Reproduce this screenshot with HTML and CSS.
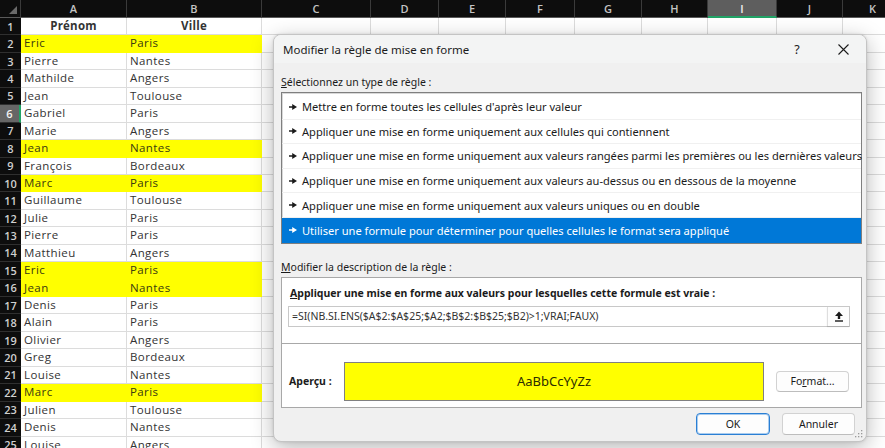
FILE: index.html
```html
<!DOCTYPE html>
<html lang="fr">
<head>
<meta charset="utf-8">
<title>Modifier la règle de mise en forme</title>
<link rel="stylesheet" href="styles.css">
</head>
<body>
<div class="sheet">
  <div class="corner"><svg class="tri" width="8" height="8" viewBox="0 0 8 8"><polygon points="8,0 8,8 0,8" fill="#6a6a6a"/></svg></div>
  <div class="ch">A</div><div class="ch">B</div><div class="ch">C</div><div class="ch">D</div><div class="ch">E</div><div class="ch">F</div><div class="ch">G</div><div class="ch">H</div><div class="ch sel">I</div><div class="ch">J</div><div class="ch">K</div>

  <div class="rh">1</div><div class="c hd">Prénom</div><div class="c hd">Ville</div><div class="c"></div><div class="c"></div><div class="c"></div><div class="c"></div><div class="c"></div><div class="c"></div><div class="c"></div><div class="c"></div><div class="c"></div>
  <div class="rh">2</div><div class="c y">Eric</div><div class="c y">Paris</div><div class="c rest"></div>
  <div class="rh">3</div><div class="c">Pierre</div><div class="c">Nantes</div><div class="c rest"></div>
  <div class="rh">4</div><div class="c">Mathilde</div><div class="c">Angers</div><div class="c rest"></div>
  <div class="rh">5</div><div class="c">Jean</div><div class="c">Toulouse</div><div class="c rest"></div>
  <div class="rh sel">6</div><div class="c">Gabriel</div><div class="c">Paris</div><div class="c rest"></div>
  <div class="rh">7</div><div class="c">Marie</div><div class="c">Angers</div><div class="c rest"></div>
  <div class="rh">8</div><div class="c y">Jean</div><div class="c y">Nantes</div><div class="c rest"></div>
  <div class="rh">9</div><div class="c">François</div><div class="c">Bordeaux</div><div class="c rest"></div>
  <div class="rh">10</div><div class="c y">Marc</div><div class="c y">Paris</div><div class="c rest"></div>
  <div class="rh">11</div><div class="c">Guillaume</div><div class="c">Toulouse</div><div class="c rest"></div>
  <div class="rh">12</div><div class="c">Julie</div><div class="c">Paris</div><div class="c rest"></div>
  <div class="rh">13</div><div class="c">Pierre</div><div class="c">Paris</div><div class="c rest"></div>
  <div class="rh">14</div><div class="c">Matthieu</div><div class="c">Angers</div><div class="c rest"></div>
  <div class="rh">15</div><div class="c y">Eric</div><div class="c y">Paris</div><div class="c rest"></div>
  <div class="rh">16</div><div class="c y">Jean</div><div class="c y">Nantes</div><div class="c rest"></div>
  <div class="rh">17</div><div class="c">Denis</div><div class="c">Paris</div><div class="c rest"></div>
  <div class="rh">18</div><div class="c">Alain</div><div class="c">Paris</div><div class="c rest"></div>
  <div class="rh">19</div><div class="c">Olivier</div><div class="c">Angers</div><div class="c rest"></div>
  <div class="rh">20</div><div class="c">Greg</div><div class="c">Bordeaux</div><div class="c rest"></div>
  <div class="rh">21</div><div class="c">Louise</div><div class="c">Nantes</div><div class="c rest"></div>
  <div class="rh">22</div><div class="c y">Marc</div><div class="c y">Paris</div><div class="c rest"></div>
  <div class="rh">23</div><div class="c">Julien</div><div class="c">Toulouse</div><div class="c rest"></div>
  <div class="rh">24</div><div class="c">Denis</div><div class="c">Nantes</div><div class="c rest"></div>
  <div class="rh">25</div><div class="c">Louise</div><div class="c">Angers</div><div class="c rest"></div>
</div>

<div class="dialog">
  <div class="titlebar">
    <span class="title">Modifier la règle de mise en forme</span>
    <span class="tb-btn">?</span>
    <span class="tb-btn"><svg width="11" height="11" viewBox="0 0 11 11"><path d="M0.5 0.5L10.5 10.5M10.5 0.5L0.5 10.5" stroke="#1b1b1b" stroke-width="1.1" fill="none"/></svg></span>
  </div>
  <div class="dlg-body">
    <div class="label lbl1"><u>S</u>électionnez un type de règle :</div>
    <ul class="rules">
      <li><svg class="arr" width="8" height="6" viewBox="0 0 8 6"><path d="M0 2.3h3.2V0L8 3 3.2 6V3.7H0z" fill="currentColor"/></svg>Mettre en forme toutes les cellules d'après leur valeur</li>
      <li><svg class="arr" width="8" height="6" viewBox="0 0 8 6"><path d="M0 2.3h3.2V0L8 3 3.2 6V3.7H0z" fill="currentColor"/></svg>Appliquer une mise en forme uniquement aux cellules qui contiennent</li>
      <li><svg class="arr" width="8" height="6" viewBox="0 0 8 6"><path d="M0 2.3h3.2V0L8 3 3.2 6V3.7H0z" fill="currentColor"/></svg>Appliquer une mise en forme uniquement aux valeurs rangées parmi les premières ou les dernières valeurs</li>
      <li><svg class="arr" width="8" height="6" viewBox="0 0 8 6"><path d="M0 2.3h3.2V0L8 3 3.2 6V3.7H0z" fill="currentColor"/></svg>Appliquer une mise en forme uniquement aux valeurs au-dessus ou en dessous de la moyenne</li>
      <li><svg class="arr" width="8" height="6" viewBox="0 0 8 6"><path d="M0 2.3h3.2V0L8 3 3.2 6V3.7H0z" fill="currentColor"/></svg>Appliquer une mise en forme uniquement aux valeurs uniques ou en double</li>
      <li class="on"><svg class="arr" width="8" height="6" viewBox="0 0 8 6"><path d="M0 2.3h3.2V0L8 3 3.2 6V3.7H0z" fill="currentColor"/></svg>Utiliser une formule pour déterminer pour quelles cellules le format sera appliqué</li>
    </ul>
    <div class="label lbl2"><u>M</u>odifier la description de la règle :</div>
    <div class="desc">
      <div class="desc-top">
        <div class="bold-line"><u>A</u>ppliquer une mise en forme aux valeurs pour lesquelles cette formule est vraie :</div>
        <div class="formula">
          <span class="ftext">=SI(NB.SI.ENS($A$2:$A$25;$A2;$B$2:$B$25;$B2)&gt;1;VRAI;FAUX)</span>
          <span class="collapse"><svg width="10" height="11" viewBox="0 0 10 11"><path d="M5 0.5L9 5H6.2V8H3.8V5H1z" fill="#1b1b1b"/><rect x="1" y="9.3" width="8" height="1.4" fill="#1b1b1b"/></svg></span>
        </div>
      </div>
      <div class="desc-bot">
        <span class="apercu">Aperçu :</span>
        <div class="preview">AaBbCcYyZz</div>
        <button class="btn fmt">Fo<u>r</u>mat...</button>
      </div>
    </div>
    <div class="actions">
      <button class="btn ok">OK</button>
      <button class="btn">Annuler</button>
    </div>
  </div>
  <svg class="grip" width="8" height="8" viewBox="0 0 8 8"><g fill="#9a9a9a"><rect x="6" y="0" width="1.3" height="1.3"/><rect x="3" y="3" width="1.3" height="1.3"/><rect x="6" y="3" width="1.3" height="1.3"/><rect x="0" y="6" width="1.3" height="1.3"/><rect x="3" y="6" width="1.3" height="1.3"/><rect x="6" y="6" width="1.3" height="1.3"/></g></svg>
</div>
</body>
</html>
```

FILE: styles.css
```css
* { box-sizing: border-box; margin: 0; padding: 0; }

body {
  width: 885px;
  height: 448px;
  overflow: hidden;
  position: relative;
  background: #ffffff;
  font-family: "Open Sans", "Noto Sans", sans-serif;
}

/* ---------- spreadsheet ---------- */
.sheet {
  display: grid;
  grid-template-columns: 21px 106px 135px 109px 68px 67px 69px 67px 66px 69px 66px 60px;
  grid-template-rows: 18px;
  grid-auto-rows: 17.45px;
  font-size: 11.5px;
  color: #333;
}

.corner {
  background: #0d0d0d;
  border-right: 1px solid #3a3a3a;
  border-bottom: 1px solid #5a5a5a;
  display: flex;
  align-items: flex-end;
  justify-content: flex-end;
  padding: 0 3px 3px 0;
}

.ch {
  background: #0d0d0d;
  color: #c4c4c4;
  border-right: 1px solid #3a3a3a;
  border-bottom: 1px solid #5a5a5a;
  display: flex;
  align-items: center;
  justify-content: center;
  font-size: 11px;
  font-weight: 600;
}
.ch.sel {
  background: #5e5e5e;
  color: #f0f0f0;
  border-bottom: 2px solid #21a366;
}

.rh {
  background: #0d0d0d;
  color: #d0d0d0;
  border-bottom: 1px solid #2f2f2f;
  display: flex;
  align-items: center;
  justify-content: center;
  font-size: 11px;
  font-weight: 600;
}
.rh.sel {
  background: #666666;
  color: #f4f4f4;
  border-right: 2px solid #21a366;
}

.c {
  border-right: 1px solid #dcdcdc;
  border-bottom: 1px solid #dcdcdc;
  padding-left: 3px;
  line-height: 16px;
  white-space: nowrap;
  overflow: hidden;
  letter-spacing: 0.4px;
}
.c.hd { font-weight: 700; text-align: center; padding-left: 0; letter-spacing: 0.2px; }
.c.y { background: #ffff00; border-color: #ffff00; color: #3a3a10; }
.c.rest { grid-column: 4 / -1; border-right: 0; }

/* ---------- dialog ---------- */
.dialog {
  position: absolute;
  left: 273px;
  top: 34px;
  width: 594px;
  height: 408px;
  background: #f0f0f0;
  border: 1px solid #c4c4c4;
  border-radius: 8px;
  box-shadow: 0 6px 22px rgba(0, 0, 0, 0.28), 0 0 3px rgba(0, 0, 0, 0.12);
  font-family: "Noto Sans", "Open Sans", sans-serif;
  font-size: 10.5px;
  color: #1b1b1b;
  overflow: hidden;
}

.titlebar {
  height: 28px;
  display: flex;
  align-items: center;
  padding-left: 9px;
  background: #f3f4f4;
}
.title { flex: 1; font-size: 11.5px; }
.tb-btn {
  width: 46px;
  height: 28px;
  display: flex;
  align-items: center;
  justify-content: center;
  font-size: 12.5px;
}

.dlg-body { padding: 0 4px 0 7px; }

.label { line-height: 14px; }
.lbl1 { margin-top: 12px; margin-bottom: 3px; }
.lbl2 { margin-top: 16px; margin-bottom: 3px; }

.rules {
  list-style: none;
  background: #ffffff;
  border: 1px solid #7f7f7f;
  box-shadow: inset 1px 1px 0 #d8d8d8;
  padding-top: 2px;
}
.rules li {
  height: 24.6px;
  display: flex;
  align-items: center;
  gap: 5px;
  padding-left: 7px;
  border-bottom: 1px solid #f0f0f0;
  white-space: nowrap;
  font-size: 11.1px;
  color: #1b1b1b;
}
.rules li:last-child { border-bottom: 0; }
.rules li.on { background: #0078d7; color: #ffffff; }
.arr { flex: none; }

.desc {
  background: #ffffff;
  border: 1px solid #a8a8a8;
}
.desc-top {
  padding: 8px 11px 16px 6px;
  border-bottom: 1px solid #a8a8a8;
}
.bold-line { font-weight: 700; line-height: 14px; padding-left: 2px; white-space: nowrap; }
.formula {
  margin-top: 6px;
  height: 21px;
  border: 1px solid #c8c8c8;
  display: flex;
  align-items: center;
  padding-left: 3px;
  color: #333;
}
.ftext { flex: 1; white-space: nowrap; }
.collapse {
  width: 22px;
  height: 19px;
  display: flex;
  align-items: center;
  justify-content: center;
  border-left: 1px solid #dedede;
  box-shadow: 0 1px 1px rgba(0, 0, 0, 0.12);
  background: #fdfdfd;
}

.desc-bot {
  display: flex;
  align-items: center;
  padding: 18px 12px 6px 7px;
}
.apercu { width: 55px; font-weight: 700; }
.preview {
  width: 420px;
  height: 39px;
  background: #ffff00;
  border: 1px solid #808080;
  display: flex;
  align-items: center;
  justify-content: center;
  font-size: 13px;
  color: #2d2d00;
}
.btn {
  font-family: "Noto Sans", "Open Sans", sans-serif;
  font-size: 10.5px;
  color: #1b1b1b;
  background: #fdfdfd;
  border: 1px solid #d2d2d2;
  border-bottom-color: #bdbdbd;
  border-radius: 4px;
  height: 22px;
}
.fmt { width: 73px; height: 21px; margin-left: 12px; }

.actions {
  display: flex;
  justify-content: flex-end;
  gap: 12px;
  margin-top: 5px;
  margin-right: 7px;
}
.actions .btn { width: 73px; }
.ok {
  width: 74px !important;
  border: 1px solid #2a7fd4;
  box-shadow: inset 0 0 0 1px #a9ccef;
}

.grip { position: absolute; right: 3px; bottom: 3px; }
```
